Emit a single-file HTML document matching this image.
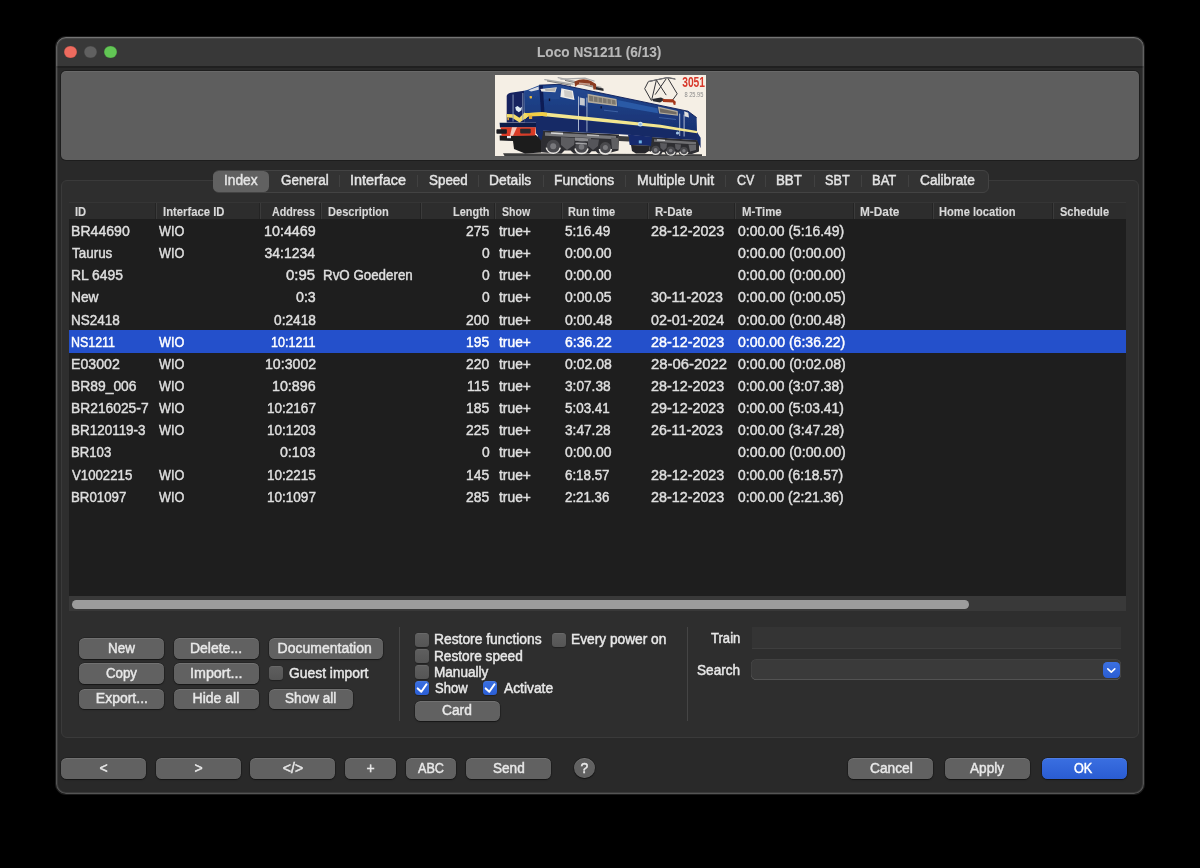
<!DOCTYPE html>
<html><head><meta charset="utf-8"><title>Loco NS1211</title>
<style>
html,body{margin:0;padding:0;background:#000;}
body{width:1200px;height:868px;position:relative;overflow:hidden;font-family:"Liberation Sans",sans-serif;}
div,span,svg{position:absolute;box-sizing:border-box;}
.t{white-space:nowrap;line-height:16px;height:16px;-webkit-text-stroke:0.45px;transform-origin:0 0;}
.win{left:56px;top:37px;width:1088px;height:757px;border-radius:10px;background:#292929;overflow:hidden;}
.winb{left:56px;top:37px;width:1088px;height:757px;border-radius:10px;box-shadow:inset 0 1px 0 rgba(255,255,255,.12),inset 0 0 0 1px rgba(255,255,255,.14),inset 0 0 0 2px rgba(255,255,255,.08),0 0 0 1px #1b1b1b;}
.tb{left:0;top:0;width:1088px;height:30.8px;background:#383838;border-bottom:2px solid #202020;}
.tl{width:12.8px;height:12.8px;border-radius:50%;top:45.6px;box-shadow:inset 0 0 0 0.5px rgba(0,0,0,.22);}
.panel{left:61px;top:71px;width:1078px;height:89px;border-radius:5px;background:#5e5e5e;box-shadow:inset 0 1px 0 rgba(255,255,255,.07),0 0 0 1px rgba(0,0,0,.28);}
.group{left:61px;top:180px;width:1078px;height:558px;border-radius:6px;background:#2e2e2e;border:1px solid #3a3a3a;}
.tabs{left:212.5px;top:170px;width:776.5px;height:22.5px;border-radius:6px;background:#333333;border:1px solid #434343;}
.tabsel{left:213px;top:170.7px;width:56px;height:21.2px;border-radius:5.5px;background:#616161;}
.tsep{width:1px;top:175px;height:12px;background:#414141;}
.table{left:69px;top:203px;width:1057.2px;height:393px;background:#1e1e1e;}
.thead{left:69px;top:202.3px;width:1057.2px;height:17px;background:#2d2d2d;box-shadow:inset 0 0.7px 0 #393939;}
.hsep{width:2px;top:203px;height:16px;background:linear-gradient(90deg,#242424 50%,#3b3b3b 50%);}
.sel{left:69px;top:330.3px;width:1057.2px;height:22.3px;background:#2450cb;}
.track{left:69px;top:596px;width:1057.2px;height:15.2px;background:#393939;}
.thumb{left:72.3px;top:599.9px;width:897px;height:8.7px;border-radius:4.4px;background:#9c9c9c;}
.btn{height:20.5px;border-radius:5.5px;background:#616161;box-shadow:inset 0 1px 0.5px rgba(255,255,255,.1),0 0 0 0.6px rgba(0,0,0,.35),0 1px 1.2px rgba(0,0,0,.45);}
.cb{width:14px;height:14px;border-radius:3.5px;background:linear-gradient(#5f5f5f,#555555);box-shadow:inset 0 0.5px 0 rgba(255,255,255,.12),0 0.5px 1px rgba(0,0,0,.3);}
.cb.on{background:linear-gradient(#3a6fe0,#2b5fd6);}
.vsep{width:1px;top:626.5px;height:94.5px;background:#454545;}
.field{left:752px;top:627px;width:369px;height:21.7px;background:#343434;box-shadow:inset 0 -1px 0 #3e3e3e;}
.combo{left:751px;top:659.2px;width:370.4px;height:21px;border-radius:5.5px;background:#3a3a3a;box-shadow:inset 0 -0.5px 0 rgba(255,255,255,.18),inset 0 0 0 0.5px rgba(255,255,255,.08);}
.cbtn{left:1103.3px;top:661.5px;width:16.6px;height:16.5px;border-radius:4.2px;background:linear-gradient(#3b70e2,#2a5dd3);}
.help{left:574.3px;top:758px;width:20.3px;height:20.3px;border-radius:50%;background:#616161;box-shadow:inset 0 1px 0.5px rgba(255,255,255,.1),0 0 0 0.6px rgba(0,0,0,.35),0 1px 1.2px rgba(0,0,0,.45);}
.txt{left:0;top:0;width:1200px;height:868px;will-change:transform;}

</style></head><body>
<div class="win"><div class="tb"></div></div>
<div class="tl" style="left:64px;background:#ed6b5f"></div><div class="tl" style="left:84.2px;background:#606060"></div><div class="tl" style="left:104.4px;background:#62c655"></div>
<div class="panel"></div>
<!--LOCO_S--><svg style="left:494.5px;top:75px" width="211.5" height="81" viewBox="0 0 211.5 81">
<defs>
<filter id="bl" x="-5%" y="-5%" width="110%" height="110%"><feGaussianBlur stdDeviation="0.45"/></filter>
<linearGradient id="side" x1="0" y1="0" x2="0" y2="1"><stop offset="0" stop-color="#234a93"/><stop offset="0.45" stop-color="#1b3a7e"/><stop offset="1" stop-color="#152865"/></linearGradient>
<clipPath id="cp"><rect x="0" y="0" width="211.5" height="81"/></clipPath>
</defs>
<rect x="0" y="0" width="211.5" height="81" fill="#f5efe5"/>
<g clip-path="url(#cp)" filter="url(#bl)">
<!-- track -->
<path d="M8 78.3 L207 79.3 L207 81 L9.5 81 Z" fill="#3c3c3e"/>
<!-- bogie 1 -->
<path d="M46 55.5 L124 59.5 L123.5 75.5 L112 78.5 L60 78.5 L44 77 L40 66 Z" fill="#2e2e32"/>
<path d="M50 57.3 L121 61 L121 64.2 L50 60.8 Z" fill="#77777a"/>
<path d="M56 57.2 L68 57.8 L68 59.4 L56 58.8 Z" fill="#d9d9d9"/>
<path d="M92 59.3 L104 59.9 L104 61.3 L92 60.7 Z" fill="#bdbdbd"/>
<circle cx="58.2" cy="71.3" r="6.6" fill="#4a4a4e"/><circle cx="86.5" cy="72" r="6.2" fill="#4a4a4e"/><circle cx="110.4" cy="72.6" r="5.6" fill="#4a4a4e"/>
<circle cx="58.2" cy="71.3" r="3" fill="#78787c"/><circle cx="86.5" cy="72" r="2.8" fill="#78787c"/><circle cx="110.4" cy="72.6" r="2.5" fill="#78787c"/>
<path d="M66 62 L80 63 L79 70 L72 75 L66 70 Z" fill="#5c5c60"/>
<path d="M80 62.5 L96 63.5 L96 66.5 L80 65.8 Z" fill="#8a8a8d"/>
<path d="M93 64 L104 64.6 L103 71 L98 75 L93 71 Z" fill="#55555a"/>
<path d="M80.5 67.5 L92 68.2 L92 69.6 L80.5 69 Z" fill="#a5a5a8"/>
<path d="M116 62.5 L123 63 L123 74 L117 74 Z" fill="#5e5e62"/>
<g fill="none" stroke="#e9e7e3" stroke-width="1.5">
<path d="M51.3 72.6 A7.1 7.1 0 0 0 65.2 72.6"/><path d="M80 73.5 A6.7 6.7 0 0 0 93 73.5"/><path d="M104.4 74 A6.1 6.1 0 0 0 116.4 74"/>
</g>
<g fill="#f5efe5"><path d="M66.3 78.7 L79 78.7 L75.5 75.6 L69.5 75.6 Z"/><path d="M94 78.9 L103.4 78.9 L100.8 76.2 L96.6 76.2 Z"/></g>
<!-- bogie 2 -->
<path d="M156 62 L204 65.2 L204 76.5 L197 79 L160 79 L154 76 Z" fill="#2e2e32"/>
<path d="M159 64.3 L201 67 L201 69.4 L159 66.8 Z" fill="#707073"/>
<path d="M162 64.3 L170 64.8 L170 66 L162 65.5 Z" fill="#cfcfcf"/>
<circle cx="160.6" cy="75" r="4.2" fill="#4a4a4e"/><circle cx="175.7" cy="75.5" r="4.1" fill="#4a4a4e"/><circle cx="188.9" cy="75.8" r="3.9" fill="#4a4a4e"/>
<circle cx="160.6" cy="75" r="1.9" fill="#7c7c80"/><circle cx="175.7" cy="75.5" r="1.8" fill="#7c7c80"/><circle cx="188.9" cy="75.8" r="1.7" fill="#7c7c80"/>
<path d="M165 68 L172 68.4 L171.5 73 L168.5 75.5 L165.5 73 Z" fill="#5a5a5e"/>
<path d="M180 69 L186 69.4 L185.5 73.6 L183 75.6 L180.4 73.6 Z" fill="#5a5a5e"/>
<path d="M193.5 69.5 L201 70 L201 75 L195 76.5 Z" fill="#66666a"/>
<g fill="none" stroke="#e3e1dd" stroke-width="1.2">
<path d="M156.2 76 A4.6 4.6 0 0 0 165 76.3"/><path d="M171.3 76.5 A4.5 4.5 0 0 0 180.1 76.7"/><path d="M184.8 76.7 A4.3 4.3 0 0 0 193 76.9"/>
</g>
<g fill="#f5efe5"><path d="M166.2 79.3 L170.6 79.3 L169.5 77.2 L167.4 77.2 Z"/><path d="M181 79.4 L184.4 79.4 L183.7 77.5 L181.7 77.5 Z"/></g>
<!-- underframe tank -->
<path d="M133 59.4 L157 61.8 L156 71 L134.7 70 Z" fill="#162c6e"/>
<path d="M136 70 L155 70.8 L154 76 L150 78.5 L141 78.5 L137 76 Z" fill="#26262a"/>
<rect x="143.8" y="65.4" width="3" height="3" fill="#6fb4e6"/>
<path d="M124 61 L134 61.5 L134 66.5 L124 66 Z" fill="#3a3a3e"/>
<!-- front plough / coupler -->
<path d="M4.6 60.5 L41 60 L46 66 L46 77.5 L30 78.5 L19 74 L18 66 L4.8 65.5 Z" fill="#1b1b1f"/>
<!-- nose apron -->
<path d="M4.6 47.7 L41.5 47.7 L41.5 52.6 L5 52.6 Z" fill="#111c48"/>
<!-- red buffer beam -->
<path d="M5.6 52.3 L40.8 52.3 L40.2 60.6 L6.7 61 Z" fill="#d93a26"/>
<path d="M17 52.3 L22 52.3 L18 60.8 L15 60.8 Z" fill="#f2c9bd"/>
<rect x="1.4" y="54.2" width="10.5" height="4.6" rx="0.8" fill="#1e1e22"/>
<rect x="25.2" y="53.8" width="10.5" height="4.6" rx="0.8" fill="#2a2a2e"/>
<rect x="12" y="61" width="4" height="2.2" fill="#dfe8ee"/>
<!-- body: front face of nose -->
<path d="M11.7 21 Q12 18.8 15.8 17.8 L29 15.8 L29.5 47.4 L11.7 47.4 Z" fill="#14245f"/>
<!-- nose side + cab + body side -->
<path d="M29 15.8 L33 14.7 L44.2 10.2 L64 9.3 L193 36.2 L201.6 42.6 L202 57 L205.6 62.8 L205.6 73.2 L202 65 L157 62 L133 59.6 L48.2 55.6 L46.5 65 L41 58 L41 47.5 L29.5 47.4 Z" fill="url(#side)"/>
<!-- darker lower half of side -->
<path d="M29.5 40.8 L47.2 41 L202 58 L202 65 L157 62 L133 59.6 L48.2 55.6 L46.5 65 L41 58 L41 47.5 L29.5 47.4 Z" fill="#152966"/>
<!-- roof top edge dark -->
<path d="M44.2 10.2 L64 9.3 L193 36.2 L201.6 42.6" fill="none" stroke="#0f1c55" stroke-width="0.9"/>
<!-- lighter blue panel band -->
<path d="M122.4 25 L162.5 33.3 L163 38.2 L122.6 31.2 Z" fill="#2b5aa6"/>
<path d="M48 17.5 L64 16.5 L64.5 24 L48 24.5 Z" fill="#21468f"/>
<!-- cab pillar shadow -->
<path d="M44.2 10.4 L47.8 10.2 L49.5 38 L46 38 Z" fill="#0f1c55"/>
<!-- windshield -->
<path d="M45.4 13.9 L61.9 12.2 L60.3 17.3 L46.4 16.5 Z" fill="#e9e7e2"/>
<path d="M50 14 L60.8 13 L59.8 16.6 L50.5 16.1 Z" fill="#b8b6b2"/>
<path d="M33.5 15.2 L43.6 11.4 L43.8 14.8 L36 16.6 Z" fill="#d7dbe2"/>
<!-- side window -->
<path d="M66.3 13.3 L77.9 15.7 L79.5 24.9 L65.4 21.9 Z" fill="#efede8"/>
<path d="M69 15 L76.8 16.6 L77.9 23.3 L69.5 21.6 Z" fill="#cfcdc8"/>
<!-- door -->
<path d="M83 21.2 L84 21.4 L84 55.9 L83 55.8 Z M91.4 22.6 L92.4 22.8 L92.4 56.5 L91.4 56.4 Z" fill="#a9b6cf"/>
<path d="M84.8 22.6 L89.8 23.6 L89.8 30.8 L84.8 30 Z" fill="#c5c9cf"/>
<path d="M84.2 31 L91.2 32 L91.2 56 L84.2 55.6 Z" fill="#13266a" opacity="0.7"/>
<!-- grille 1 -->
<path d="M92.6 18.8 L121.5 24 L122.1 31.2 L92.9 27.4 Z" fill="#b5ad9d"/>
<path d="M94 20.6 L120.4 25.3 L120.8 29.8 L94.2 26.1 Z" fill="#7c776e"/>
<g stroke="#b5ad9d" stroke-width="0.7"><path d="M98.5 21.3 L98.6 26.7 M103 22.1 L103.1 27.3 M107.5 22.9 L107.6 27.9 M112 23.7 L112.1 28.6 M116.3 24.5 L116.4 29.2"/></g>
<!-- grille 2 -->
<path d="M162.9 31.6 L182.7 36 L183 40.7 L164.2 38.6 Z" fill="#b5ad9d"/>
<path d="M164.6 33.3 L181.5 37 L181.7 39.6 L165.2 37.5 Z" fill="#6f6b64"/>
<!-- rear door rails + window -->
<path d="M184.2 38.5 L185.2 38.7 L185.2 61 L184.2 60.9 Z M188.6 39.5 L189.6 39.7 L189.6 61.5 L188.6 61.4 Z" fill="#a9b6cf"/>
<path d="M189.2 36.3 L193.3 37.8 L194 42.5 L189.5 41.3 Z" fill="#e4e2de"/>
<circle cx="182.5" cy="58" r="1.6" fill="#9fc4e6"/>
<!-- small details -->
<rect x="53.8" y="23.5" width="1.4" height="2.6" fill="#0a0f2d"/>
<rect x="105.5" y="31.2" width="1.4" height="2.2" fill="#0a0f2d"/>
<path d="M109 35.2 L123 36.8" stroke="#5f86c9" stroke-width="0.5"/>
<path d="M164 42.5 L181 44.5" stroke="#5f86c9" stroke-width="0.5"/>
<!-- yellow stripe side -->
<path d="M29.5 38.2 L47.2 37.3 L105.5 43.2 L165.5 49.8 L202 56 L202 58.2 L165.5 52.8 L105.5 46.7 L47.2 40.9 L33 41.3 L30 44 Z" fill="#f3e68f"/>
<path d="M29.5 38.2 L47.2 37.3 L52 37.8 L52 41.4 L47.2 40.9 L33 41.3 L30 44 Z" fill="#f2cf45"/>
<!-- stripe V on the front -->
<path d="M11.7 39 L19 39.2 L24.4 42.8 L29.6 37.6 L33.5 41.2 L24.6 47.4 L17 42.7 L11.7 42.5 Z" fill="#f3dc68"/>
<!-- NS logo on stripe -->
<circle cx="145.3" cy="49.2" r="2.4" fill="#c9dff0"/><circle cx="145.3" cy="49.2" r="1.2" fill="#8fb7dc"/>
<!-- front emblem -->
<path d="M22.6 31 L25.2 33 L27 31.8 L26.4 35.2 L23.8 37.2 L21 35.3 L20.2 32.2 Z" fill="#dfeaf4"/>
<!-- front handrails -->
<path d="M17.6 19.5 L18.5 19.4 L18.5 46.5 L17.6 46.5 Z M27.4 18 L28.3 17.9 L28.3 45 L27.4 45 Z" fill="#8f9dc0"/>
<!-- lamps -->
<rect x="34.6" y="21" width="2.4" height="2.4" rx="0.6" fill="#e5b73c"/>
<rect x="34" y="40.4" width="3.2" height="3.6" rx="0.6" fill="#e0a93a"/>
<rect x="12.4" y="42.6" width="1.6" height="2.6" fill="#d9a43a"/>
<!-- pantograph 1 (folded) -->
<g stroke="#a9a9a9" stroke-width="1.3" fill="none" stroke-linecap="round"><path d="M49.8 4.6 L78 9.2"/><path d="M63.2 2.6 L106 12.4"/><path d="M66 4.2 L90 3.2 L99 6"/></g>
<g stroke="#4c4c4c" stroke-width="0.7" fill="none"><path d="M52 6 L76 10.2"/><path d="M70 5.4 L104 13.4"/></g>
<path d="M79.5 6.5 Q88 2.5 96 6 L101 9 L101.4 14.4 L98.4 14.4 L98 10.6 L83 9.6 L80 11.8 Z" fill="#8c3d22"/>
<path d="M84 7.6 L95 8.4 L95 10 L84 9.4 Z" fill="#f5efe5" opacity=".55"/>
<path d="M101 12 L108.4 13.6 L108.6 16 L101 14.6 Z" fill="#2a2a2e"/>
<!-- pantograph 2 (raised) -->
<g stroke="#333337" stroke-width="1.0" fill="none" stroke-linejoin="round" stroke-linecap="round">
<path d="M156.3 25.4 L149.7 13.7 L153.3 6.6 L172.5 2.6 L180.1 4.1"/>
<path d="M172.5 2.6 L182.2 18.8 L176.6 26.4"/>
<path d="M161.4 5.1 L171 19.8"/><path d="M161.4 5.1 L156.8 24.4"/><path d="M171 4.1 L160.4 19.3"/>
</g>
<path d="M153 6.6 L172.5 2.5 L179.8 3.8" stroke="#77777a" stroke-width="1.1" fill="none"/>
<path d="M157 24 L166 22.4 L170 24.6 L165 27.4 L158 26.2 Z" fill="#2a2a2e"/>
<path d="M167.6 24 L178 24.2 L180.8 26.8 L180.4 30 L178.6 29.8 L178 27.6 L168 27 Z" fill="#a5391f"/>
<!-- price text -->
</g>
<g filter="url(#bl)">
<text x="187.2" y="11.7" font-family="Liberation Sans, sans-serif" font-weight="700" font-size="14.8" fill="#d8392c" textLength="22.8" lengthAdjust="spacingAndGlyphs">3051</text>
<text x="189.4" y="21.6" font-family="Liberation Sans, sans-serif" font-size="6.4" fill="#8a8a8a" textLength="19" lengthAdjust="spacingAndGlyphs">8 25.95</text>
</g>
</svg>
<!--LOCO_E-->
<div class="group"></div>
<div class="tabs"></div><div class="tabsel"></div>
<div class="tsep" style="left:339.2px"></div>
<div class="tsep" style="left:416.7px"></div>
<div class="tsep" style="left:477.8px"></div>
<div class="tsep" style="left:542.5px"></div>
<div class="tsep" style="left:625.0px"></div>
<div class="tsep" style="left:724.8px"></div>
<div class="tsep" style="left:765.0px"></div>
<div class="tsep" style="left:813.7px"></div>
<div class="tsep" style="left:860.7px"></div>
<div class="tsep" style="left:907.8px"></div>
<div class="table"></div><div class="thead"></div>
<div class="hsep" style="left:155.1px"></div>
<div class="hsep" style="left:259.1px"></div>
<div class="hsep" style="left:320.1px"></div>
<div class="hsep" style="left:420.1px"></div>
<div class="hsep" style="left:494.1px"></div>
<div class="hsep" style="left:561.1px"></div>
<div class="hsep" style="left:647.1px"></div>
<div class="hsep" style="left:734.1px"></div>
<div class="hsep" style="left:853.1px"></div>
<div class="hsep" style="left:932.1px"></div>
<div class="hsep" style="left:1052.1px"></div>
<div class="sel"></div><div class="track"></div><div class="thumb"></div>
<div class="btn" style="left:79.2px;top:638px;width:85.0px;"></div>
<div class="btn" style="left:173.8px;top:638px;width:85.0px;"></div>
<div class="btn" style="left:79.2px;top:663.3px;width:85.0px;"></div>
<div class="btn" style="left:173.8px;top:663.3px;width:85.0px;"></div>
<div class="btn" style="left:79.2px;top:688.6px;width:85.0px;"></div>
<div class="btn" style="left:173.8px;top:688.6px;width:85.0px;"></div>
<div class="btn" style="left:268.7px;top:638px;width:114.1px;"></div>
<div class="btn" style="left:268.7px;top:688.6px;width:84.6px;"></div>
<div class="cb" style="left:268.8px;top:666.3px"></div>
<div class="cb" style="left:414.7px;top:632.6px"></div>
<div class="cb" style="left:414.7px;top:648.6px"></div>
<div class="cb" style="left:414.7px;top:664.6px"></div>
<div class="cb on" style="left:414.7px;top:680.6px"></div>
<div class="cb" style="left:551.7px;top:632.6px"></div>
<div class="cb on" style="left:483.3px;top:680.6px"></div>
<svg style="left:414.7px;top:680.6px" width="14" height="14" viewBox="0 0 14 14"><path d="M2.7 7.4 L6.3 10.8 L11.5 3.3" fill="none" stroke="#fff" stroke-width="2" stroke-linecap="round" stroke-linejoin="round"/></svg>
<svg style="left:483.3px;top:680.6px" width="14" height="14" viewBox="0 0 14 14"><path d="M2.7 7.4 L6.3 10.8 L11.5 3.3" fill="none" stroke="#fff" stroke-width="2" stroke-linecap="round" stroke-linejoin="round"/></svg>
<div class="btn" style="left:414.5px;top:700.6px;width:85.0px;"></div>
<div class="vsep" style="left:398.5px"></div><div class="vsep" style="left:686.5px"></div>
<div class="field"></div><div class="combo"></div><div class="cbtn"></div>
<svg style="left:1103.3px;top:661.5px" width="16.6" height="16.5" viewBox="0 0 16.6 16.5"><path d="M4.8 6.9 L8.3 10.1 L11.8 6.9" fill="none" stroke="#fff" stroke-width="1.6" stroke-linecap="round" stroke-linejoin="round"/></svg>
<div class="btn" style="left:61px;top:758px;width:85px;"></div>
<div class="btn" style="left:155.7px;top:758px;width:85px;"></div>
<div class="btn" style="left:250.2px;top:758px;width:85px;"></div>
<div class="btn" style="left:344.9px;top:758px;width:51.3px;"></div>
<div class="btn" style="left:405.6px;top:758px;width:50.5px;"></div>
<div class="btn" style="left:466.1px;top:758px;width:85px;"></div>
<div class="btn" style="left:848.2px;top:758px;width:85.0px;"></div>
<div class="btn" style="left:945px;top:758px;width:85.0px;"></div>
<div class="btn" style="left:1041.7px;top:758px;width:85.0px;background:linear-gradient(#3a6fe1,#2a5cd2);"></div>
<div class="help"></div>
<div class="winb"></div>
<div class="txt">
<span class="t" style="left:537.00px;top:44px;font-size:14px;font-weight:700;color:#b8b8b8;transform:scaleX(0.9744);-webkit-text-stroke:0.12px;">Loco NS1211 (6/13)</span>
<span class="t" style="left:224.22px;top:172px;font-size:14px;font-weight:400;color:#e4e4e4;transform:scaleX(0.9813);">Index</span>
<span class="t" style="left:281.01px;top:172px;font-size:14px;font-weight:400;color:#e4e4e4;transform:scaleX(0.9586);">General</span>
<span class="t" style="left:349.75px;top:172px;font-size:14px;font-weight:400;color:#e4e4e4;transform:scaleX(1.0282);">Interface</span>
<span class="t" style="left:428.78px;top:172px;font-size:14px;font-weight:400;color:#e4e4e4;transform:scaleX(0.9573);">Speed</span>
<span class="t" style="left:489.01px;top:172px;font-size:14px;font-weight:400;color:#e4e4e4;transform:scaleX(0.9861);">Details</span>
<span class="t" style="left:554.01px;top:172px;font-size:14px;font-weight:400;color:#e4e4e4;transform:scaleX(0.9910);">Functions</span>
<span class="t" style="left:637.00px;top:172px;font-size:14px;font-weight:400;color:#e4e4e4;">Multiple Unit</span>
<span class="t" style="left:737.22px;top:172px;font-size:14px;font-weight:400;color:#e4e4e4;transform:scaleX(0.8891);">CV</span>
<span class="t" style="left:776.05px;top:172px;font-size:14px;font-weight:400;color:#e4e4e4;transform:scaleX(0.9495);">BBT</span>
<span class="t" style="left:825.30px;top:172px;font-size:14px;font-weight:400;color:#e4e4e4;transform:scaleX(0.9042);">SBT</span>
<span class="t" style="left:872.27px;top:172px;font-size:14px;font-weight:400;color:#e4e4e4;transform:scaleX(0.9257);">BAT</span>
<span class="t" style="left:920.42px;top:172px;font-size:14px;font-weight:400;color:#e4e4e4;transform:scaleX(0.9777);">Calibrate</span>
<span class="t" style="left:74.86px;top:204px;font-size:12px;font-weight:700;color:#d8d8d8;transform:scaleX(0.9314);-webkit-text-stroke:0.12px;">ID</span>
<span class="t" style="left:163.01px;top:204px;font-size:12px;font-weight:700;color:#d8d8d8;transform:scaleX(0.9403);-webkit-text-stroke:0.12px;">Interface ID</span>
<span class="t" style="left:272.35px;top:204px;font-size:12px;font-weight:700;color:#d8d8d8;transform:scaleX(0.8929);-webkit-text-stroke:0.12px;">Address</span>
<span class="t" style="left:327.85px;top:204px;font-size:12px;font-weight:700;color:#d8d8d8;transform:scaleX(0.9212);-webkit-text-stroke:0.12px;">Description</span>
<span class="t" style="left:452.88px;top:204px;font-size:12px;font-weight:700;color:#d8d8d8;transform:scaleX(0.9125);-webkit-text-stroke:0.12px;">Length</span>
<span class="t" style="left:502.20px;top:204px;font-size:12px;font-weight:700;color:#d8d8d8;transform:scaleX(0.8787);-webkit-text-stroke:0.12px;">Show</span>
<span class="t" style="left:568.49px;top:204px;font-size:12px;font-weight:700;color:#d8d8d8;transform:scaleX(0.9194);-webkit-text-stroke:0.12px;">Run time</span>
<span class="t" style="left:654.78px;top:204px;font-size:12px;font-weight:700;color:#d8d8d8;transform:scaleX(0.9658);-webkit-text-stroke:0.12px;">R-Date</span>
<span class="t" style="left:742.02px;top:204px;font-size:12px;font-weight:700;color:#d8d8d8;transform:scaleX(0.9503);-webkit-text-stroke:0.12px;">M-Time</span>
<span class="t" style="left:860.32px;top:204px;font-size:12px;font-weight:700;color:#d8d8d8;transform:scaleX(0.9863);-webkit-text-stroke:0.12px;">M-Date</span>
<span class="t" style="left:938.85px;top:204px;font-size:12px;font-weight:700;color:#d8d8d8;transform:scaleX(0.9250);-webkit-text-stroke:0.12px;">Home location</span>
<span class="t" style="left:1059.75px;top:204px;font-size:12px;font-weight:700;color:#d8d8d8;transform:scaleX(0.9199);-webkit-text-stroke:0.12px;">Schedule</span>
<span class="t" style="left:70.51px;top:223px;font-size:14px;font-weight:400;color:#dfdfdf;transform:scaleX(1.0058);">BR44690</span>
<span class="t" style="left:159.00px;top:223px;font-size:14px;font-weight:400;color:#dfdfdf;transform:scaleX(0.9039);">WIO</span>
<span class="t" style="left:263.98px;top:223px;font-size:14px;font-weight:400;color:#dfdfdf;transform:scaleX(1.0225);">10:4469</span>
<span class="t" style="left:466.33px;top:223px;font-size:14px;font-weight:400;color:#dfdfdf;transform:scaleX(0.9900);">275</span>
<span class="t" style="left:498.60px;top:223px;font-size:14px;font-weight:400;color:#dfdfdf;transform:scaleX(0.9875);">true+</span>
<span class="t" style="left:564.78px;top:223px;font-size:14px;font-weight:400;color:#dfdfdf;transform:scaleX(0.9681);">5:16.49</span>
<span class="t" style="left:651.34px;top:223px;font-size:14px;font-weight:400;color:#dfdfdf;transform:scaleX(1.0235);">28-12-2023</span>
<span class="t" style="left:738.06px;top:223px;font-size:14px;font-weight:400;color:#dfdfdf;transform:scaleX(0.9965);">0:00.00 (5:16.49)</span>
<span class="t" style="left:71.99px;top:245px;font-size:14px;font-weight:400;color:#dfdfdf;transform:scaleX(0.9594);">Taurus</span>
<span class="t" style="left:159.00px;top:245px;font-size:14px;font-weight:400;color:#dfdfdf;transform:scaleX(0.9039);">WIO</span>
<span class="t" style="left:264.48px;top:245px;font-size:14px;font-weight:400;color:#dfdfdf;">34:1234</span>
<span class="t" style="left:481.89px;top:245px;font-size:14px;font-weight:400;color:#dfdfdf;transform:scaleX(0.9900);">0</span>
<span class="t" style="left:498.60px;top:245px;font-size:14px;font-weight:400;color:#dfdfdf;transform:scaleX(0.9875);">true+</span>
<span class="t" style="left:565.08px;top:245px;font-size:14px;font-weight:400;color:#dfdfdf;transform:scaleX(0.9954);">0:00.00</span>
<span class="t" style="left:738.06px;top:245px;font-size:14px;font-weight:400;color:#dfdfdf;transform:scaleX(1.0108);">0:00.00 (0:00.00)</span>
<span class="t" style="left:70.96px;top:267px;font-size:14px;font-weight:400;color:#dfdfdf;transform:scaleX(0.9921);">RL 6495</span>
<span class="t" style="left:286.45px;top:267px;font-size:14px;font-weight:400;color:#dfdfdf;transform:scaleX(1.0660);">0:95</span>
<span class="t" style="left:323.45px;top:267px;font-size:14px;font-weight:400;color:#dfdfdf;transform:scaleX(0.9531);">RvO Goederen</span>
<span class="t" style="left:481.89px;top:267px;font-size:14px;font-weight:400;color:#dfdfdf;transform:scaleX(0.9900);">0</span>
<span class="t" style="left:498.60px;top:267px;font-size:14px;font-weight:400;color:#dfdfdf;transform:scaleX(0.9875);">true+</span>
<span class="t" style="left:565.08px;top:267px;font-size:14px;font-weight:400;color:#dfdfdf;transform:scaleX(0.9954);">0:00.00</span>
<span class="t" style="left:738.06px;top:267px;font-size:14px;font-weight:400;color:#dfdfdf;transform:scaleX(1.0108);">0:00.00 (0:00.00)</span>
<span class="t" style="left:71.02px;top:289px;font-size:14px;font-weight:400;color:#dfdfdf;transform:scaleX(0.9828);">New</span>
<span class="t" style="left:296.46px;top:289px;font-size:14px;font-weight:400;color:#dfdfdf;transform:scaleX(1.0140);">0:3</span>
<span class="t" style="left:481.89px;top:289px;font-size:14px;font-weight:400;color:#dfdfdf;transform:scaleX(0.9900);">0</span>
<span class="t" style="left:498.60px;top:289px;font-size:14px;font-weight:400;color:#dfdfdf;transform:scaleX(0.9875);">true+</span>
<span class="t" style="left:565.08px;top:289px;font-size:14px;font-weight:400;color:#dfdfdf;transform:scaleX(0.9959);">0:00.05</span>
<span class="t" style="left:651.48px;top:289px;font-size:14px;font-weight:400;color:#dfdfdf;transform:scaleX(1.0176);">30-11-2023</span>
<span class="t" style="left:738.06px;top:289px;font-size:14px;font-weight:400;color:#dfdfdf;transform:scaleX(1.0108);">0:00.00 (0:00.05)</span>
<span class="t" style="left:71.03px;top:312px;font-size:14px;font-weight:400;color:#dfdfdf;transform:scaleX(0.9653);">NS2418</span>
<span class="t" style="left:274.47px;top:312px;font-size:14px;font-weight:400;color:#dfdfdf;transform:scaleX(0.9797);">0:2418</span>
<span class="t" style="left:466.29px;top:312px;font-size:14px;font-weight:400;color:#dfdfdf;transform:scaleX(0.9900);">200</span>
<span class="t" style="left:498.60px;top:312px;font-size:14px;font-weight:400;color:#dfdfdf;transform:scaleX(0.9875);">true+</span>
<span class="t" style="left:565.06px;top:312px;font-size:14px;font-weight:400;color:#dfdfdf;transform:scaleX(1.0073);">0:00.48</span>
<span class="t" style="left:651.46px;top:312px;font-size:14px;font-weight:400;color:#dfdfdf;transform:scaleX(1.0233);">02-01-2024</span>
<span class="t" style="left:738.06px;top:312px;font-size:14px;font-weight:400;color:#dfdfdf;transform:scaleX(1.0108);">0:00.00 (0:00.48)</span>
<span class="t" style="left:71.11px;top:334px;font-size:14px;font-weight:400;color:#ffffff;transform:scaleX(0.8882);">NS1211</span>
<span class="t" style="left:159.00px;top:334px;font-size:14px;font-weight:400;color:#ffffff;transform:scaleX(0.9039);">WIO</span>
<span class="t" style="left:271.33px;top:334px;font-size:14px;font-weight:400;color:#ffffff;transform:scaleX(0.8986);">10:1211</span>
<span class="t" style="left:466.33px;top:334px;font-size:14px;font-weight:400;color:#ffffff;transform:scaleX(0.9900);">195</span>
<span class="t" style="left:498.60px;top:334px;font-size:14px;font-weight:400;color:#ffffff;transform:scaleX(0.9875);">true+</span>
<span class="t" style="left:564.93px;top:334px;font-size:14px;font-weight:400;color:#ffffff;transform:scaleX(1.0034);">6:36.22</span>
<span class="t" style="left:651.34px;top:334px;font-size:14px;font-weight:400;color:#ffffff;transform:scaleX(1.0235);">28-12-2023</span>
<span class="t" style="left:738.20px;top:334px;font-size:14px;font-weight:400;color:#ffffff;transform:scaleX(1.0063);">0:00.00 (6:36.22)</span>
<span class="t" style="left:70.50px;top:356px;font-size:14px;font-weight:400;color:#dfdfdf;transform:scaleX(1.0118);">E03002</span>
<span class="t" style="left:159.00px;top:356px;font-size:14px;font-weight:400;color:#dfdfdf;transform:scaleX(0.9039);">WIO</span>
<span class="t" style="left:264.65px;top:356px;font-size:14px;font-weight:400;color:#dfdfdf;transform:scaleX(1.0106);">10:3002</span>
<span class="t" style="left:466.29px;top:356px;font-size:14px;font-weight:400;color:#dfdfdf;transform:scaleX(0.9900);">220</span>
<span class="t" style="left:498.60px;top:356px;font-size:14px;font-weight:400;color:#dfdfdf;transform:scaleX(0.9875);">true+</span>
<span class="t" style="left:565.07px;top:356px;font-size:14px;font-weight:400;color:#dfdfdf;">0:02.08</span>
<span class="t" style="left:651.31px;top:356px;font-size:14px;font-weight:400;color:#dfdfdf;transform:scaleX(1.0596);">28-06-2022</span>
<span class="t" style="left:738.06px;top:356px;font-size:14px;font-weight:400;color:#dfdfdf;transform:scaleX(1.0108);">0:00.00 (0:02.08)</span>
<span class="t" style="left:71.01px;top:378px;font-size:14px;font-weight:400;color:#dfdfdf;transform:scaleX(0.9907);">BR89_006</span>
<span class="t" style="left:159.00px;top:378px;font-size:14px;font-weight:400;color:#dfdfdf;transform:scaleX(0.9039);">WIO</span>
<span class="t" style="left:271.98px;top:378px;font-size:14px;font-weight:400;color:#dfdfdf;transform:scaleX(1.0192);">10:896</span>
<span class="t" style="left:467.36px;top:378px;font-size:14px;font-weight:400;color:#dfdfdf;transform:scaleX(0.9900);">115</span>
<span class="t" style="left:498.60px;top:378px;font-size:14px;font-weight:400;color:#dfdfdf;transform:scaleX(0.9875);">true+</span>
<span class="t" style="left:565.10px;top:378px;font-size:14px;font-weight:400;color:#dfdfdf;transform:scaleX(0.9757);">3:07.38</span>
<span class="t" style="left:651.34px;top:378px;font-size:14px;font-weight:400;color:#dfdfdf;transform:scaleX(1.0235);">28-12-2023</span>
<span class="t" style="left:738.06px;top:378px;font-size:14px;font-weight:400;color:#dfdfdf;transform:scaleX(0.9925);">0:00.00 (3:07.38)</span>
<span class="t" style="left:71.01px;top:400px;font-size:14px;font-weight:400;color:#dfdfdf;transform:scaleX(0.9869);">BR216025-7</span>
<span class="t" style="left:159.00px;top:400px;font-size:14px;font-weight:400;color:#dfdfdf;transform:scaleX(0.9039);">WIO</span>
<span class="t" style="left:267.03px;top:400px;font-size:14px;font-weight:400;color:#dfdfdf;transform:scaleX(0.9663);">10:2167</span>
<span class="t" style="left:466.33px;top:400px;font-size:14px;font-weight:400;color:#dfdfdf;transform:scaleX(0.9900);">185</span>
<span class="t" style="left:498.60px;top:400px;font-size:14px;font-weight:400;color:#dfdfdf;transform:scaleX(0.9875);">true+</span>
<span class="t" style="left:564.77px;top:400px;font-size:14px;font-weight:400;color:#dfdfdf;transform:scaleX(0.9587);">5:03.41</span>
<span class="t" style="left:651.34px;top:400px;font-size:14px;font-weight:400;color:#dfdfdf;transform:scaleX(1.0235);">29-12-2023</span>
<span class="t" style="left:738.06px;top:400px;font-size:14px;font-weight:400;color:#dfdfdf;transform:scaleX(0.9925);">0:00.00 (5:03.41)</span>
<span class="t" style="left:71.04px;top:422px;font-size:14px;font-weight:400;color:#dfdfdf;transform:scaleX(0.9613);">BR120119-3</span>
<span class="t" style="left:159.00px;top:422px;font-size:14px;font-weight:400;color:#dfdfdf;transform:scaleX(0.9039);">WIO</span>
<span class="t" style="left:267.04px;top:422px;font-size:14px;font-weight:400;color:#dfdfdf;transform:scaleX(0.9621);">10:1203</span>
<span class="t" style="left:466.33px;top:422px;font-size:14px;font-weight:400;color:#dfdfdf;transform:scaleX(0.9900);">225</span>
<span class="t" style="left:498.60px;top:422px;font-size:14px;font-weight:400;color:#dfdfdf;transform:scaleX(0.9875);">true+</span>
<span class="t" style="left:565.10px;top:422px;font-size:14px;font-weight:400;color:#dfdfdf;transform:scaleX(0.9757);">3:47.28</span>
<span class="t" style="left:651.34px;top:422px;font-size:14px;font-weight:400;color:#dfdfdf;transform:scaleX(1.0178);">26-11-2023</span>
<span class="t" style="left:738.06px;top:422px;font-size:14px;font-weight:400;color:#dfdfdf;transform:scaleX(0.9964);">0:00.00 (3:47.28)</span>
<span class="t" style="left:71.06px;top:444px;font-size:14px;font-weight:400;color:#dfdfdf;transform:scaleX(0.9398);">BR103</span>
<span class="t" style="left:280.47px;top:444px;font-size:14px;font-weight:400;color:#dfdfdf;transform:scaleX(1.0113);">0:103</span>
<span class="t" style="left:481.89px;top:444px;font-size:14px;font-weight:400;color:#dfdfdf;transform:scaleX(0.9900);">0</span>
<span class="t" style="left:498.60px;top:444px;font-size:14px;font-weight:400;color:#dfdfdf;transform:scaleX(0.9875);">true+</span>
<span class="t" style="left:565.08px;top:444px;font-size:14px;font-weight:400;color:#dfdfdf;transform:scaleX(0.9954);">0:00.00</span>
<span class="t" style="left:738.06px;top:444px;font-size:14px;font-weight:400;color:#dfdfdf;transform:scaleX(1.0108);">0:00.00 (0:00.00)</span>
<span class="t" style="left:72.00px;top:467px;font-size:14px;font-weight:400;color:#dfdfdf;transform:scaleX(0.9434);">V1002215</span>
<span class="t" style="left:159.00px;top:467px;font-size:14px;font-weight:400;color:#dfdfdf;transform:scaleX(0.9039);">WIO</span>
<span class="t" style="left:267.04px;top:467px;font-size:14px;font-weight:400;color:#dfdfdf;transform:scaleX(0.9613);">10:2215</span>
<span class="t" style="left:466.33px;top:467px;font-size:14px;font-weight:400;color:#dfdfdf;transform:scaleX(0.9900);">145</span>
<span class="t" style="left:498.60px;top:467px;font-size:14px;font-weight:400;color:#dfdfdf;transform:scaleX(0.9875);">true+</span>
<span class="t" style="left:564.81px;top:467px;font-size:14px;font-weight:400;color:#dfdfdf;transform:scaleX(0.9517);">6:18.57</span>
<span class="t" style="left:651.34px;top:467px;font-size:14px;font-weight:400;color:#dfdfdf;transform:scaleX(1.0235);">28-12-2023</span>
<span class="t" style="left:738.09px;top:467px;font-size:14px;font-weight:400;color:#dfdfdf;transform:scaleX(0.9859);">0:00.00 (6:18.57)</span>
<span class="t" style="left:71.05px;top:489px;font-size:14px;font-weight:400;color:#dfdfdf;transform:scaleX(0.9472);">BR01097</span>
<span class="t" style="left:159.00px;top:489px;font-size:14px;font-weight:400;color:#dfdfdf;transform:scaleX(0.9039);">WIO</span>
<span class="t" style="left:267.03px;top:489px;font-size:14px;font-weight:400;color:#dfdfdf;transform:scaleX(0.9663);">10:1097</span>
<span class="t" style="left:466.33px;top:489px;font-size:14px;font-weight:400;color:#dfdfdf;transform:scaleX(0.9900);">285</span>
<span class="t" style="left:498.60px;top:489px;font-size:14px;font-weight:400;color:#dfdfdf;transform:scaleX(0.9875);">true+</span>
<span class="t" style="left:564.97px;top:489px;font-size:14px;font-weight:400;color:#dfdfdf;transform:scaleX(0.9496);">2:21.36</span>
<span class="t" style="left:651.34px;top:489px;font-size:14px;font-weight:400;color:#dfdfdf;transform:scaleX(1.0235);">28-12-2023</span>
<span class="t" style="left:738.07px;top:489px;font-size:14px;font-weight:400;color:#dfdfdf;transform:scaleX(0.9901);">0:00.00 (2:21.36)</span>
<span class="t" style="left:107.84px;top:640px;font-size:14px;font-weight:400;color:#e8e8e8;transform:scaleX(0.9575);">New</span>
<span class="t" style="left:189.80px;top:640px;font-size:14px;font-weight:400;color:#e8e8e8;transform:scaleX(0.9980);">Delete...</span>
<span class="t" style="left:277.60px;top:640px;font-size:14px;font-weight:400;color:#e8e8e8;">Documentation</span>
<span class="t" style="left:106.02px;top:665px;font-size:14px;font-weight:400;color:#e8e8e8;transform:scaleX(0.9490);">Copy</span>
<span class="t" style="left:190.15px;top:665px;font-size:14px;font-weight:400;color:#e8e8e8;transform:scaleX(1.0216);">Import...</span>
<span class="t" style="left:289.01px;top:665px;font-size:14px;font-weight:400;color:#e8e8e8;transform:scaleX(0.9907);">Guest import</span>
<span class="t" style="left:95.80px;top:690px;font-size:14px;font-weight:400;color:#e8e8e8;">Export...</span>
<span class="t" style="left:192.60px;top:690px;font-size:14px;font-weight:400;color:#e8e8e8;">Hide all</span>
<span class="t" style="left:285.17px;top:690px;font-size:14px;font-weight:400;color:#e8e8e8;transform:scaleX(0.9711);">Show all</span>
<span class="t" style="left:434.01px;top:631px;font-size:14px;font-weight:400;color:#e8e8e8;transform:scaleX(0.9877);">Restore functions</span>
<span class="t" style="left:571.02px;top:631px;font-size:14px;font-weight:400;color:#e8e8e8;transform:scaleX(0.9801);">Every power on</span>
<span class="t" style="left:434.03px;top:648px;font-size:14px;font-weight:400;color:#e8e8e8;transform:scaleX(0.9746);">Restore speed</span>
<span class="t" style="left:434.03px;top:664px;font-size:14px;font-weight:400;color:#e8e8e8;transform:scaleX(0.9694);">Manually</span>
<span class="t" style="left:435.03px;top:680px;font-size:14px;font-weight:400;color:#e8e8e8;transform:scaleX(0.9295);">Show</span>
<span class="t" style="left:503.80px;top:680px;font-size:14px;font-weight:400;color:#e8e8e8;transform:scaleX(0.9855);">Activate</span>
<span class="t" style="left:442.20px;top:702px;font-size:14px;font-weight:400;color:#e8e8e8;transform:scaleX(0.9830);">Card</span>
<span class="t" style="left:710.79px;top:630px;font-size:14px;font-weight:400;color:#e8e8e8;transform:scaleX(0.9353);">Train</span>
<span class="t" style="left:697.36px;top:662px;font-size:14px;font-weight:400;color:#e8e8e8;transform:scaleX(0.9712);">Search</span>
<span class="t" style="left:99.45px;top:760px;font-size:14px;font-weight:400;color:#e8e8e8;">&lt;</span>
<span class="t" style="left:194.50px;top:760px;font-size:14px;font-weight:400;color:#e8e8e8;">&gt;</span>
<span class="t" style="left:282.85px;top:760px;font-size:14px;font-weight:400;color:#e8e8e8;">&lt;/&gt;</span>
<span class="t" style="left:366.50px;top:760px;font-size:14px;font-weight:400;color:#e8e8e8;">+</span>
<span class="t" style="left:580.42px;top:760px;font-size:14px;font-weight:400;color:#e8e8e8;">?</span>
<span class="t" style="left:418.00px;top:760px;font-size:14px;font-weight:400;color:#e8e8e8;transform:scaleX(0.9016);">ABC</span>
<span class="t" style="left:492.97px;top:760px;font-size:14px;font-weight:400;color:#e8e8e8;transform:scaleX(0.9704);">Send</span>
<span class="t" style="left:870.21px;top:760px;font-size:14px;font-weight:400;color:#e8e8e8;transform:scaleX(0.9802);">Cancel</span>
<span class="t" style="left:970.00px;top:760px;font-size:14px;font-weight:400;color:#e8e8e8;transform:scaleX(0.9709);">Apply</span>
<span class="t" style="left:1074.31px;top:760px;font-size:14px;font-weight:400;color:#ffffff;transform:scaleX(0.9016);">OK</span>
</div>
</body></html>
